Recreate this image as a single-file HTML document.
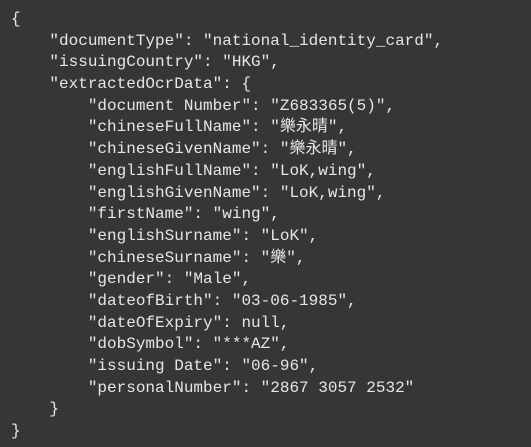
<!DOCTYPE html>
<html><head><meta charset="utf-8"><style>
html,body{margin:0;padding:0;background:#363636;width:531px;height:447px;overflow:hidden}
.w{padding:9px 0 0 11px;font-family:"Liberation Mono","DejaVu Sans Mono","Noto Sans CJK TC",monospace;font-size:16px;color:#e6e6e6;white-space:pre}
.w div{height:21.7px;line-height:21.7px;overflow:visible}
</style></head><body><div class="w"><div>{</div><div>    "documentType": "national_identity_card",</div><div>    "issuingCountry": "HKG",</div><div>    "extractedOcrData": {</div><div>        "document Number": "Z683365(5)",</div><div>        "chineseFullName": "樂永晴",</div><div>        "chineseGivenName": "樂永晴",</div><div>        "englishFullName": "LoK,wing",</div><div>        "englishGivenName": "LoK,wing",</div><div>        "firstName": "wing",</div><div>        "englishSurname": "LoK",</div><div>        "chineseSurname": "樂",</div><div>        "gender": "Male",</div><div>        "dateofBirth": "03-06-1985",</div><div>        "dateOfExpiry": null,</div><div>        "dobSymbol": "***AZ",</div><div>        "issuing Date": "06-96",</div><div>        "personalNumber": "2867 3057 2532"</div><div>    }</div><div>}</div></div></body></html>
